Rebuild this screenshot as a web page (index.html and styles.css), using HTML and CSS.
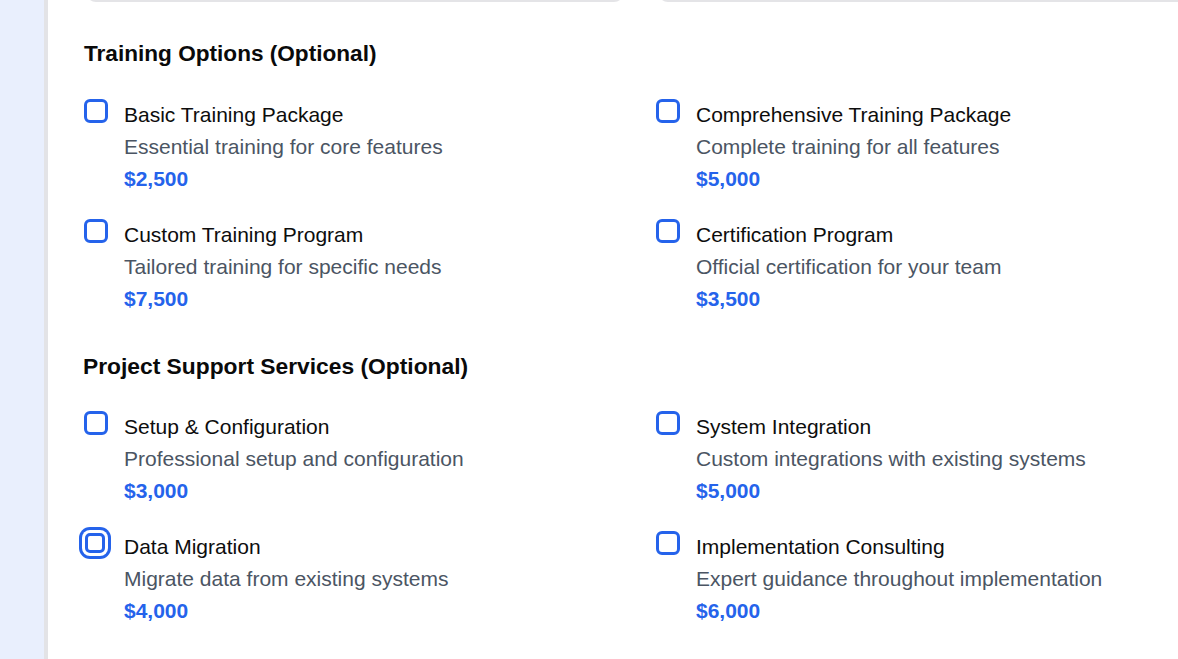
FILE: index.html
```html
<!DOCTYPE html>
<html lang="en">
<head>
<meta charset="utf-8">
<title>Options</title>
<link rel="stylesheet" href="styles.css">
</head>
<body>
<div class="page">
  <aside class="sidebar"></aside>
  <main class="main">
    <div class="fields">
      <div class="field"></div>
      <div class="field"></div>
    </div>

    <section class="section section-first">
      <h2 class="section-title">Training Options (Optional)</h2>
      <div class="options">
        <label class="option">
          <span class="box"></span>
          <span class="info">
            <span class="name">Basic Training Package</span>
            <span class="desc">Essential training for core features</span>
            <span class="price">$2,500</span>
          </span>
        </label>
        <label class="option">
          <span class="box"></span>
          <span class="info">
            <span class="name">Comprehensive Training Package</span>
            <span class="desc">Complete training for all features</span>
            <span class="price">$5,000</span>
          </span>
        </label>
        <label class="option">
          <span class="box"></span>
          <span class="info">
            <span class="name">Custom Training Program</span>
            <span class="desc">Tailored training for specific needs</span>
            <span class="price">$7,500</span>
          </span>
        </label>
        <label class="option">
          <span class="box"></span>
          <span class="info">
            <span class="name">Certification Program</span>
            <span class="desc">Official certification for your team</span>
            <span class="price">$3,500</span>
          </span>
        </label>
      </div>
    </section>

    <section class="section">
      <h2 class="section-title section-title-2">Project Support Services (Optional)</h2>
      <div class="options">
        <label class="option">
          <span class="box"></span>
          <span class="info">
            <span class="name">Setup &amp; Configuration</span>
            <span class="desc">Professional setup and configuration</span>
            <span class="price">$3,000</span>
          </span>
        </label>
        <label class="option">
          <span class="box"></span>
          <span class="info">
            <span class="name">System Integration</span>
            <span class="desc">Custom integrations with existing systems</span>
            <span class="price">$5,000</span>
          </span>
        </label>
        <label class="option">
          <span class="box box-focused"></span>
          <span class="info">
            <span class="name">Data Migration</span>
            <span class="desc">Migrate data from existing systems</span>
            <span class="price">$4,000</span>
          </span>
        </label>
        <label class="option">
          <span class="box"></span>
          <span class="info">
            <span class="name">Implementation Consulting</span>
            <span class="desc">Expert guidance throughout implementation</span>
            <span class="price">$6,000</span>
          </span>
        </label>
      </div>
    </section>
  </main>
</div>
</body>
</html>
```

FILE: styles.css
```css
* { box-sizing: border-box; }

html, body {
  margin: 0;
  padding: 0;
  width: 1178px;
  height: 659px;
  overflow: hidden;
  background: #ffffff;
  font-family: "Liberation Sans", Arial, sans-serif;
}

.page {
  display: flex;
  height: 659px;
}

.sidebar {
  flex: 0 0 48px;
  background: #e9effd;
  border-right: 4px solid #e3e3e6;
}

.main {
  flex: 0 0 auto;
  padding-left: 36px;
  background: #ffffff;
}

.fields {
  display: grid;
  grid-template-columns: 540px 540px;
  column-gap: 32px;
  margin-top: -40px;
}

.field {
  height: 42px;
  border: 2px solid #e4e4e7;
  border-radius: 10px;
  margin-left: 2px;
}

.section {
  margin-top: 35px;
}

.section-first {
  margin-top: 36px;
}

.section-title {
  margin: 0 0 29px 0;
  font-size: 22.6px;
  line-height: 32px;
  font-weight: 700;
  color: #0a0a0a;
}

.section-title-2 {
  margin-left: -1px;
  font-size: 22.8px;
}

.options {
  display: grid;
  grid-template-columns: 540px 540px;
  column-gap: 32px;
  row-gap: 24px;
}

.option {
  display: flex;
  align-items: flex-start;
  gap: 16px;
}

.box {
  flex: 0 0 24px;
  width: 24px;
  height: 24px;
  border: 3px solid #2563eb;
  border-radius: 6px;
  background: #ffffff;
}

.box-focused {
  flex: 0 0 20px;
  width: 20px;
  height: 20px;
  margin: 2px 3px 0 1px;
  border-radius: 5px;
  box-shadow: 0 0 0 3px #ffffff, 0 0 0 6px #2563eb;
}

.info {
  display: flex;
  flex-direction: column;
  font-size: 21px;
  line-height: 32px;
}

.name {
  color: #0d0d0d;
}

.desc {
  color: #4b5563;
}

.price {
  color: #2563eb;
  font-weight: 700;
}
```
